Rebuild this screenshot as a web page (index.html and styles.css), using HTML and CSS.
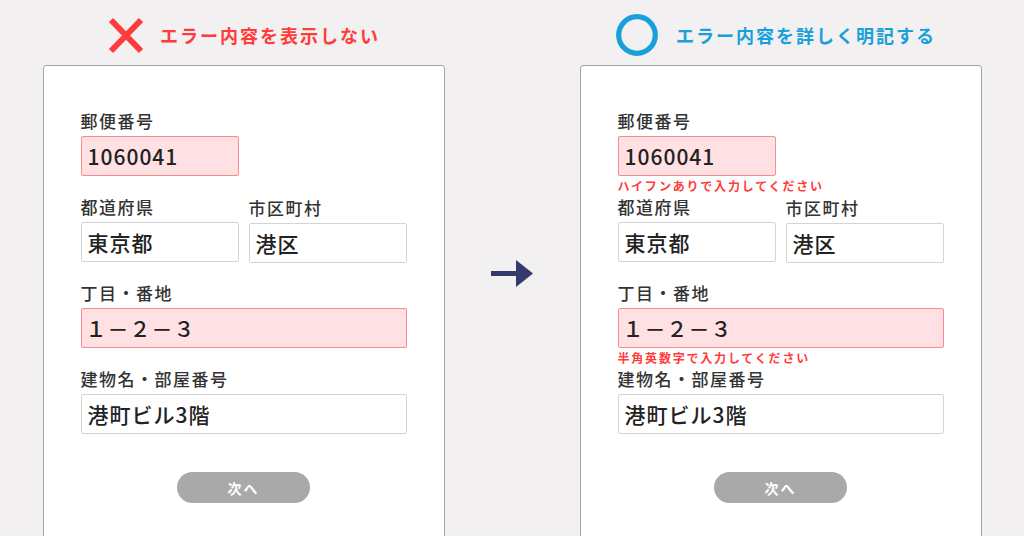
FILE: index.html
```html
<!DOCTYPE html>
<html lang="ja">
<head>
    <meta charset="UTF-8">
    <title>エラー表示の比較</title>
    <link rel="stylesheet" href="styles.css">
</head>
<body>
    <div class="page">
        <!-- 悪い例 -->
        <section class="col">
            <h2 class="head head-ng">
                <svg class="mark" width="38" height="37" viewBox="0 0 38 37">
                    <path d="M4 3 L34 34 M34 3 L4 34" stroke="#ff3b3b" stroke-width="6" fill="none"/>
                </svg>
                <span>エラー内容を表示しない</span>
            </h2>
            <div class="card">
                <div class="field">
                    <div class="label">郵便番号</div>
                    <div class="input half is-error">1060041</div>
                    <div class="msg"></div>
                </div>
                <div class="row">
                    <div class="field">
                        <div class="label">都道府県</div>
                        <div class="input half">東京都</div>
                        <div class="msg"></div>
                    </div>
                    <div class="field sub">
                        <div class="label">市区町村</div>
                        <div class="input half">港区</div>
                    </div>
                </div>
                <div class="field">
                    <div class="label">丁目・番地</div>
                    <div class="input is-error wide-num">１－２－３</div>
                    <div class="msg"></div>
                </div>
                <div class="field">
                    <div class="label">建物名・部屋番号</div>
                    <div class="input">港町ビル3階</div>
                </div>
                <button class="next">次へ</button>
            </div>
        </section>

        <div class="arrow">
            <svg width="42" height="27" viewBox="0 0 42 27">
                <rect x="0" y="11" width="27" height="5" fill="#353a6c"/>
                <polygon points="25,0 42,13.5 25,27" fill="#353a6c"/>
            </svg>
        </div>

        <!-- 良い例 -->
        <section class="col">
            <h2 class="head head-ok">
                <svg class="mark" width="42" height="42" viewBox="0 0 42 42">
                    <circle cx="21" cy="21" r="18.3" stroke="#17a1da" stroke-width="5.2" fill="none"/>
                </svg>
                <span>エラー内容を詳しく明記する</span>
            </h2>
            <div class="card">
                <div class="field">
                    <div class="label">郵便番号</div>
                    <div class="input half is-error">1060041</div>
                    <div class="msg">ハイフンありで入力してください</div>
                </div>
                <div class="row">
                    <div class="field">
                        <div class="label">都道府県</div>
                        <div class="input half">東京都</div>
                        <div class="msg"></div>
                    </div>
                    <div class="field sub">
                        <div class="label">市区町村</div>
                        <div class="input half">港区</div>
                    </div>
                </div>
                <div class="field">
                    <div class="label">丁目・番地</div>
                    <div class="input is-error wide-num">１－２－３</div>
                    <div class="msg">半角英数字で入力してください</div>
                </div>
                <div class="field">
                    <div class="label">建物名・部屋番号</div>
                    <div class="input">港町ビル3階</div>
                </div>
                <button class="next">次へ</button>
            </div>
        </section>
    </div>
</body>
</html>
```

FILE: styles.css
```css
html, body {
    height: 100%;
    overflow: hidden;
}

body {
    margin: 0;
    background-color: #f3f0f1;
    font-family: "Noto Sans CJK JP", "Noto Sans", sans-serif;
    color: #333;
}

.page {
    display: flex;
    justify-content: center;
}

.col {
    width: 402px;
}

/* 見出し */
.head {
    display: flex;
    align-items: center;
    justify-content: center;
    height: 42px;
    margin: 14px 0 9px;
    font-size: 18px;
    font-weight: 700;
    letter-spacing: 2px;
}

.head-ng {
    color: #ff3b3b;
    gap: 15px;
}

.head-ok {
    color: #17a1da;
    gap: 18px;
    padding-right: 9px;
}

.mark {
    display: block;
    flex-shrink: 0;
}

/* 矢印 */
.arrow {
    width: 135px;
    display: flex;
    justify-content: center;
}

.arrow svg {
    display: block;
    margin-top: 260px;
}

/* フォームカード */
.card {
    background: white;
    border: 1px solid #a3a3a3;
    border-radius: 3px;
    padding: 45px 37px 80px;
}

.row {
    display: flex;
    gap: 10px;
}

.sub {
    padding-top: 1px;
}

.label {
    font-size: 17px;
    line-height: 20px;
    font-weight: 500;
    letter-spacing: 1.5px;
    color: #333;
    margin-bottom: 5px;
}

.input {
    box-sizing: border-box;
    width: 326px;
    height: 40px;
    line-height: 38px;
    padding: 0 6px;
    border: 1px solid #d4d4d4;
    border-radius: 2px;
    background: white;
    font-size: 21px;
    font-weight: 500;
    letter-spacing: 1px;
    color: #222;
}

.input.half {
    width: 158px;
}

.input.is-error {
    background: #ffe1e3;
    border-color: #ff8a8c;
}

.wide-num {
    padding-left: 4px;
}

/* エラーメッセージ */
.msg {
    height: 21px;
    box-sizing: border-box;
    padding-top: 3px;
    font-size: 12px;
    line-height: 14px;
    font-weight: 700;
    letter-spacing: 1.8px;
    color: #ff3d3d;
    white-space: nowrap;
}

/* 次へボタン */
.next {
    display: block;
    width: 133px;
    height: 31px;
    margin: 38px auto 0;
    border: none;
    border-radius: 16px;
    background-color: #a9a9a9;
    color: white;
    font-family: inherit;
    font-size: 14px;
    font-weight: 700;
    letter-spacing: 2px;
    padding: 0;
}
```
